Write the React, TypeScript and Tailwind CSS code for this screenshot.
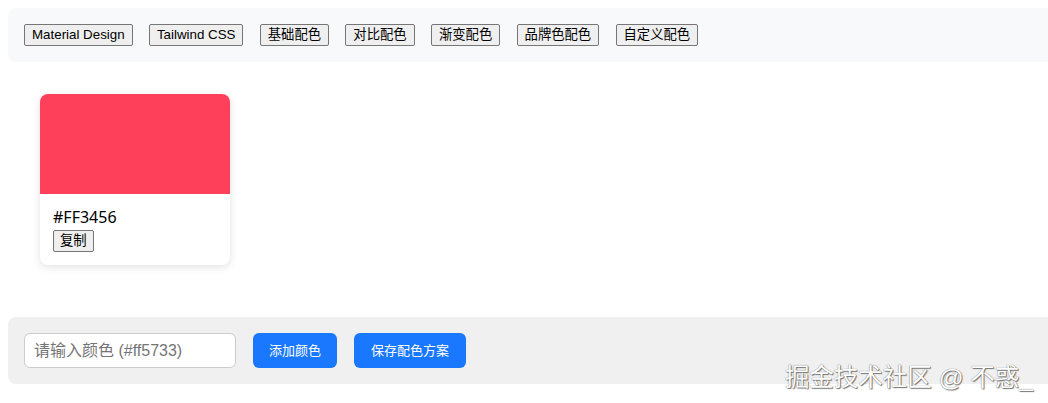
import React from "react";

const schemes = ["Material Design", "Tailwind CSS", "基础配色", "对比配色", "渐变配色", "品牌色配色", "自定义配色"];

const font = "font-['Liberation_Sans','Noto_Sans_CJK_SC',sans-serif]";

export default function App() {
  return (
    <main className={`relative w-[1048px] h-[403px] overflow-hidden bg-white pl-2 pt-2 ${font}`}>
      {/* Scheme picker */}
      <div className="flex gap-[16.3px] rounded-l-lg bg-[#f8f9fa] p-4">
        {schemes.map((s) => (
          <button
            key={s}
            className="h-[22px] rounded-[2px] border border-[#767676] bg-[#efefef] px-[7px] text-[13.33px] leading-none text-black"
          >
            {s}
          </button>
        ))}
      </div>

      {/* Colour cards */}
      <section className="flex pl-8 pt-8">
        <div className="w-[190px] overflow-hidden rounded-lg bg-white shadow-[0_2px_8px_rgba(0,0,0,0.12)]">
          <div className="h-[100px] bg-[#ff405a]" />
          <div className="px-[13px] pt-[12px] pb-[13px]">
            <p className="font-['Noto_Sans','Noto_Sans_CJK_SC',sans-serif] text-base leading-[22px] text-black">#FF3456</p>
            <button className="h-[22px] rounded-[2px] border border-[#767676] bg-[#efefef] px-[6px] text-[13.33px] leading-none text-black">
              复制
            </button>
          </div>
        </div>
      </section>

      {/* Add colour bar */}
      <div className="mt-[52px] flex items-center gap-[17px] rounded-l-lg bg-[#f0f0f0] p-4">
        <input
          placeholder="请输入颜色 (#ff5733)"
          className="h-[35px] w-[212px] rounded-md border border-[#cccccc] bg-white px-[9px] text-base text-black outline-none placeholder:text-[#757575]"
        />
        <button className="h-[35px] rounded-md bg-[#1a78ff] px-4 text-[13px] text-white">添加颜色</button>
        <button className="h-[35px] rounded-md bg-[#1a78ff] px-[17px] text-[13px] text-white">保存配色方案</button>
      </div>

      {/* Watermark */}
      <div className="pointer-events-none absolute right-[15px] bottom-[13px] text-[24.5px] leading-none text-white [text-shadow:0_0_1px_#555,1px_1px_1px_#777]">
        掘金技术社区 @ 不惑_
      </div>
    </main>
  );
}
